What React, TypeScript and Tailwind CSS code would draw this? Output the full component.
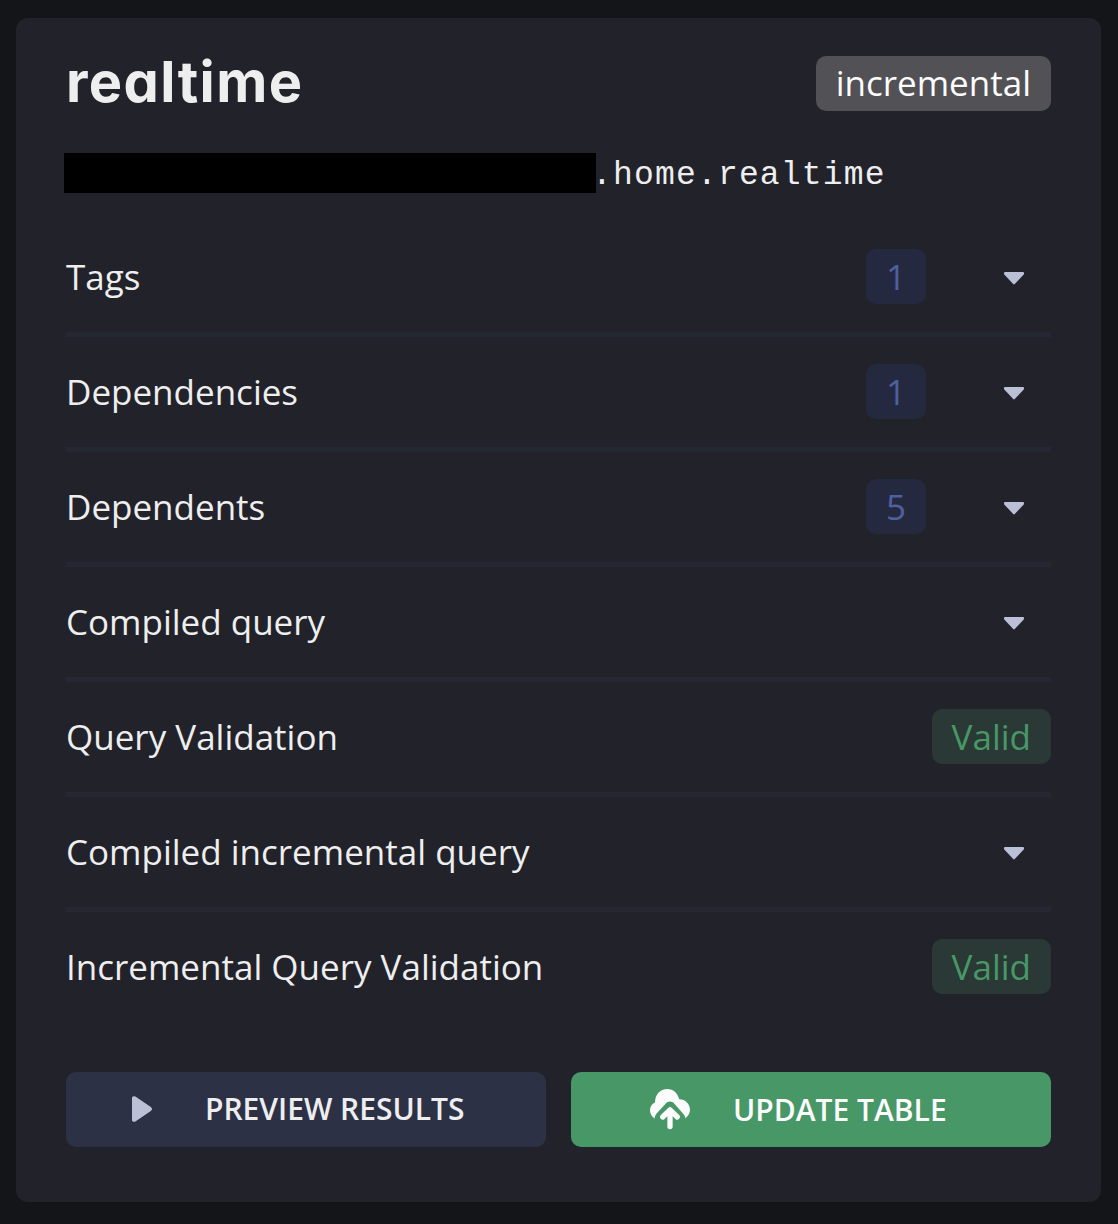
type Row = {
  label: string;
  count?: number;
  status?: string;
};

const rows: Row[] = [
  { label: "Tags", count: 1 },
  { label: "Dependencies", count: 1 },
  { label: "Dependents", count: 5 },
  { label: "Compiled query" },
  { label: "Query Validation", status: "Valid" },
  { label: "Compiled incremental query" },
  { label: "Incremental Query Validation", status: "Valid" },
];

function CaretDown() {
  return (
    <svg width="20" height="13" viewBox="0 0 20 13" className="mt-[3px] block" fill="#bcc0d6">
      <path d="M1 0H19Q20 0 20 1V1.6Q20 2 19.7 2.4L10.8 12.1Q10 12.9 9.2 12.1L.3 2.4Q0 2 0 1.6V1Q0 0 1 0Z" />
    </svg>
  );
}

function Play() {
  return (
    <svg width="20" height="26" viewBox="0 0 20 26" className="mb-[2px] block" fill="#bcc0d6">
      <path d="M0 2C0 .3 1.8-.4 3.4.6L18.8 11C20.4 12.2 20.4 13.8 18.8 15L3.4 25.4C1.8 26.4 0 25.7 0 24Z" />
    </svg>
  );
}

function CloudUpload() {
  return (
    <svg width="40" height="41" viewBox="0 0 40 41" className="block">
      <path
        fill="#fcfcfc"
        d="M4.8 29.6C1.8 27.6 0 24.6 0 21.2C0 17.8 1.9 14.9 5 13.5C5 5.6 10.2 0 17.2 0C23.2 0 27.6 4 29.2 10.2C35.4 10.2 40 15 40 20.8C40 24.2 38.3 27.2 35.2 29.3C35.2 27.6 34.6 26.3 33.4 25L24.6 15C21.8 11.8 18.2 11.8 15.4 15L6.8 24.2C5.4 25.9 4.8 27.6 4.8 29.6Z"
      />
      <path
        d="M20 21V37.6M12.7 28L20 20.8L27.3 28"
        fill="none"
        stroke="#fcfcfc"
        strokeWidth="5.3"
        strokeLinecap="round"
        strokeLinejoin="round"
      />
    </svg>
  );
}

function DetailRow({ row, last }: { row: Row; last: boolean }) {
  return (
    <div
      className={`flex h-[115px] items-center justify-between border-b-[5px] pb-px ${
        last ? "border-transparent" : "border-[#252733]"
      }`}
    >
      <span>{row.label}</span>
      {row.status ? (
        <span className="flex h-[55px] items-center rounded-[10px] bg-[#2a3936] px-5 text-[#479767]">
          {row.status}
        </span>
      ) : (
        <div className="flex items-center gap-[78px] pr-[27px]">
          {row.count !== undefined && (
            <span className="flex h-[55px] items-center rounded-[10px] bg-[#25293f] px-5 text-[#4f60a0]">
              {row.count}
            </span>
          )}
          <CaretDown />
        </div>
      )}
    </div>
  );
}

export default function App() {
  return (
    <div className="h-[1224px] w-[1118px] bg-[#141518] pt-[18px] pl-4 font-['Open_Sans',sans-serif] text-[35px] leading-[55px] text-[#eeeeee]">
      <main className="h-[1184px] w-[1085px] rounded-xl bg-[#22222b] px-[50px] pt-[38px]">
        <header className="flex h-[55px] items-center justify-between">
          <h1 className="mb-[3px] font-['Inter',sans-serif] text-[56px] font-bold tracking-[1.4px] [font-feature-settings:'cv11']">
            realtime
          </h1>
          <span className="flex h-[55px] items-center rounded-[10px] bg-[#525155] px-5 pb-[2px] text-[#fcfcfc]">
            incremental
          </span>
        </header>
        <div className="mt-[42px] -ml-[2px] flex h-10 items-center font-['Liberation_Mono',monospace]">
          <div className="h-10 w-[532px] bg-black" />
          <span className="-ml-[4px] pt-[5px] text-[33px] tracking-[1.18px]">.home.realtime</span>
        </div>
        <section className="mt-[29px]">
          {rows.map((row, i) => (
            <DetailRow key={row.label} row={row} last={i === rows.length - 1} />
          ))}
        </section>
        <footer className="mt-[45px] grid grid-cols-2 gap-[25px] text-[30px] font-semibold">
          <button className="flex h-[75px] items-center rounded-[10px] bg-[#2d3146] pl-[66px]">
            <Play />
            <span className="mb-[2px] ml-[53px]">PREVIEW RESULTS</span>
          </button>
          <button className="flex h-[75px] items-center rounded-[10px] bg-[#479767] pl-[79px] text-[#fcfcfc]">
            <CloudUpload />
            <span className="ml-[43px]">UPDATE TABLE</span>
          </button>
        </footer>
      </main>
    </div>
  );
}
